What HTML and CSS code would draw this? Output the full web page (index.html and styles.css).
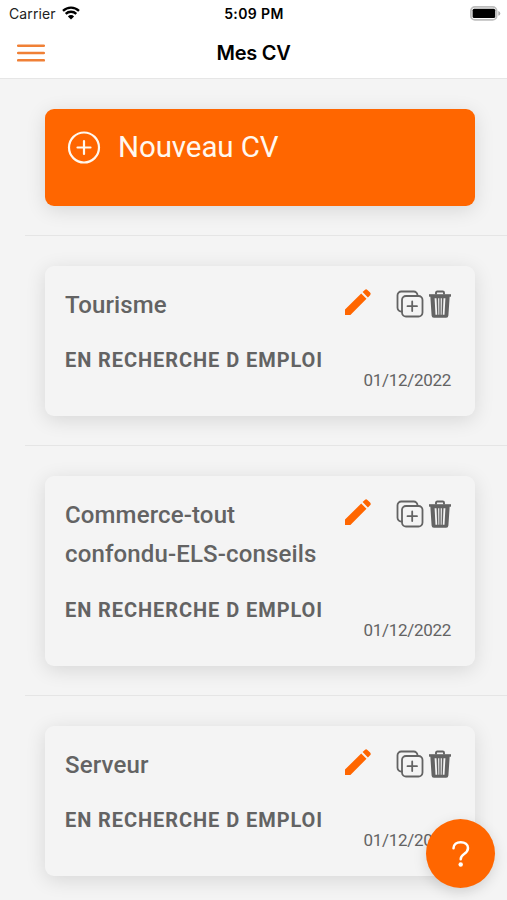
FILE: index.html
```html
<!DOCTYPE html>
<html lang="fr">
<head>
<meta charset="utf-8">
<title>Mes CV</title>
<link rel="stylesheet" href="styles.css">
</head>
<body>
<svg class="defs" width="0" height="0" aria-hidden="true">
  <symbol id="pencil" viewBox="0 0 28 28">
    <path d="M1 27V21.600L17.200 5.500l5.300 5.300L6.400 27zM18.600 4.100l2.200-2.200q1.300-1.300 2.600 0l2.700 2.700q1.300 1.300 0 2.600l-2.200 2.200z" fill="currentColor"/>
  </symbol>
  <symbol id="duplicate" viewBox="0 0 28 28">
    <g fill="none" stroke="currentColor" stroke-width="1.800" stroke-linecap="round" stroke-linejoin="round">
      <rect x="6" y="6" width="20.500" height="20.500" rx="4"/>
      <path d="M21.500 6V5.300a3.800 3.800 0 0 0-3.800-3.800H5.300A3.800 3.800 0 0 0 1.500 5.300V17.700a3.800 3.800 0 0 0 3.800 3.800H6M16.200 11.500v9.500M11.500 16.200h9.500"/>
    </g>
  </symbol>
  <symbol id="trash" viewBox="0 0 24 28">
    <path d="M8 4.500V2.800Q8 1.500 9.300 1.500h5.400Q16 1.500 16 2.800v1.700" fill="none" stroke="currentColor" stroke-width="1.900"/>
    <path d="M1 4.200h22v2.500H1z" fill="currentColor"/>
    <path fill-rule="evenodd" d="M2.300 6h19.400l-1.300 19.600q-.1 2.200-2.300 2.200H5.900q-2.200 0-2.300-2.200zM6.600 8.300l.9 16.500h1.700L8.500 8.300zM10.100 8.300l.3 16.500h.9V8.300zM12.700 8.300v16.500h.9l.3-16.500zM15.500 8.300l-.7 16.500h1.700l.9-16.500z" fill="currentColor"/>
  </symbol>
</svg>

<header class="header">
  <div class="status">
    <div class="carrier">
      <span>Carrier</span>
      <svg width="18" height="14" viewBox="0 0 18 14">
        <path d="M1 4.900a11.500 11.500 0 0 1 16 0M3.700 7.900a7.600 7.600 0 0 1 10.600 0" fill="none" stroke="#000" stroke-width="2.300"/>
        <path d="M9 13.500L5.900 10.400a4.400 4.400 0 0 1 6.200 0z"/>
      </svg>
    </div>
    <span class="clock">5:09 PM</span>
    <svg class="battery" width="31" height="15" viewBox="0 0 31 15">
      <rect x=".9" y=".9" width="25.700" height="13" rx="4" fill="#fff" stroke="#bdbdbd" stroke-width="1.800"/>
      <rect x="2.600" y="2.800" width="22.600" height="9.200" rx="1.500"/>
      <path d="M28.300 5q2 .7 2 2.400t-2 2.400z" fill="#aaa"/>
    </svg>
  </div>
  <div class="navbar">
    <button class="menu" aria-label="Menu">
      <svg width="28" height="20" viewBox="0 0 28 20"><path d="M1.200 2.700h25.600M1.200 10h25.600M1.200 17.300h25.600" stroke="#f08036" stroke-width="2.600" stroke-linecap="round"/></svg>
    </button>
    <h1>Mes CV</h1>
  </div>
</header>

<main class="list">
  <section class="item">
    <div class="card new">
      <svg width="34" height="34" viewBox="0 0 34 34" fill="none" stroke="currentColor" stroke-width="2.200" stroke-linecap="round">
        <circle cx="17" cy="16.500" r="15"/><path d="M17 10v13M10.500 16.500h13"/>
      </svg>
      <span>Nouveau CV</span>
    </div>
  </section>
  <section class="item">
    <article class="card cv">
      <div class="top">
        <h2>Tourisme</h2>
        <div class="actions"><svg class="edit"><use href="#pencil"/></svg><svg class="copy"><use href="#duplicate"/></svg><svg class="remove"><use href="#trash"/></svg></div>
      </div>
      <h3>EN RECHERCHE D EMPLOI</h3>
      <time>01/12/2022</time>
    </article>
  </section>
  <section class="item">
    <article class="card cv">
      <div class="top">
        <h2>Commerce-tout<br>confondu-ELS-conseils</h2>
        <div class="actions"><svg class="edit"><use href="#pencil"/></svg><svg class="copy"><use href="#duplicate"/></svg><svg class="remove"><use href="#trash"/></svg></div>
      </div>
      <h3>EN RECHERCHE D EMPLOI</h3>
      <time>01/12/2022</time>
    </article>
  </section>
  <section class="item">
    <article class="card cv">
      <div class="top">
        <h2>Serveur</h2>
        <div class="actions"><svg class="edit"><use href="#pencil"/></svg><svg class="copy"><use href="#duplicate"/></svg><svg class="remove"><use href="#trash"/></svg></div>
      </div>
      <h3>EN RECHERCHE D EMPLOI</h3>
      <time>01/12/2022</time>
    </article>
  </section>
</main>

<button class="help" aria-label="Aide">
  <svg width="20" height="28" viewBox="0 0 20 28">
    <path d="M2.500 8.300C2.500 4.200 5.700 2.200 9.700 2.200c4.200 0 7.300 2.300 7.300 5.800 0 2.900-1.700 4.500-3.900 6-2.400 1.600-3.400 2.700-3.400 5.300" fill="none" stroke="#fff" stroke-width="2.500" stroke-linecap="round"/>
    <circle cx="9.700" cy="24.500" r="2.200" fill="#fff"/>
  </svg>
</button>
</body>
</html>
```

FILE: styles.css
```css
* { box-sizing: border-box; }
body {
  margin: 0;
  height: 900px;
  overflow: hidden;
  background: #f4f4f4;
  font-family: Roboto, "Liberation Sans", sans-serif;
  color: #636363;
}
h1, h2, h3 { margin: 0; }
button { border: 0; padding: 0; background: none; }
.defs { display: block; position: absolute; }

.header {
  height: 79px;
  background: #fff;
  border-bottom: 1px solid #e6e6e6;
  color: #000;
  font-family: Inter, sans-serif;
}
.status {
  height: 27px;
  padding: 0 6px 0 9px;
  display: grid;
  grid-template-columns: 1fr auto 1fr;
  align-items: center;
  font-size: 14px;
}
.carrier { display: flex; align-items: center; gap: 6px; color: #222; letter-spacing: .1px; }
.carrier svg { margin-top: -2px; }
.clock { margin-left: -2px; font-weight: 600; font-size: 14px; letter-spacing: .4px; }
.battery { justify-self: end; }
.navbar {
  height: 51px;
  padding: 0 17px;
  display: grid;
  grid-template-columns: 1fr auto 1fr;
  align-items: center;
}
.menu { width: 28px; }
.menu svg { display: block; }
.navbar h1 { font-size: 20px; font-weight: 600; letter-spacing: -.3px; }

.item {
  margin-left: 25px;
  padding: 30px 32px 29px 20px;
  border-bottom: 1px solid #e5e5e5;
}
.card {
  border-radius: 9px;
  box-shadow: 0 4px 20px rgba(0, 0, 0, .12);
}
.new {
  height: 97px;
  padding: 22px 22px 0;
  display: flex;
  align-items: flex-start;
  gap: 17px;
  background: #ff6600;
  color: #fff8ef;
  font-size: 29.5px;
  line-height: 33px;
  letter-spacing: -.1px;
}
.cv { padding: 19.7px 20px 25px; display: flex; flex-direction: column; }
.top { display: flex; justify-content: space-between; }
h2 { font-size: 24px; font-weight: 500; line-height: 39.3px; letter-spacing: .14px; }
.actions { display: flex; padding: 4px 3px 0 0; }
.actions svg { display: block; height: 28px; }
.edit { width: 28px; margin: -2px 24px 0 0; color: #ff6600; }
.copy { width: 28px; margin-right: 4px; }
.remove { width: 24px; }
h3 { margin-top: 22.3px; font-size: 20px; font-weight: 700; line-height: 26px; letter-spacing: .93px; }
time { align-self: flex-end; margin: -3px 4px 0 0; font-size: 17px; line-height: 21px; letter-spacing: -.3px; }

.help {
  position: fixed;
  right: 12px;
  bottom: 12px;
  width: 69px;
  height: 69px;
  border-radius: 50%;
  display: grid;
  place-items: center;
  background: #ff6600;
  box-shadow: 0 4px 14px rgba(0, 0, 0, .13);
}
```
